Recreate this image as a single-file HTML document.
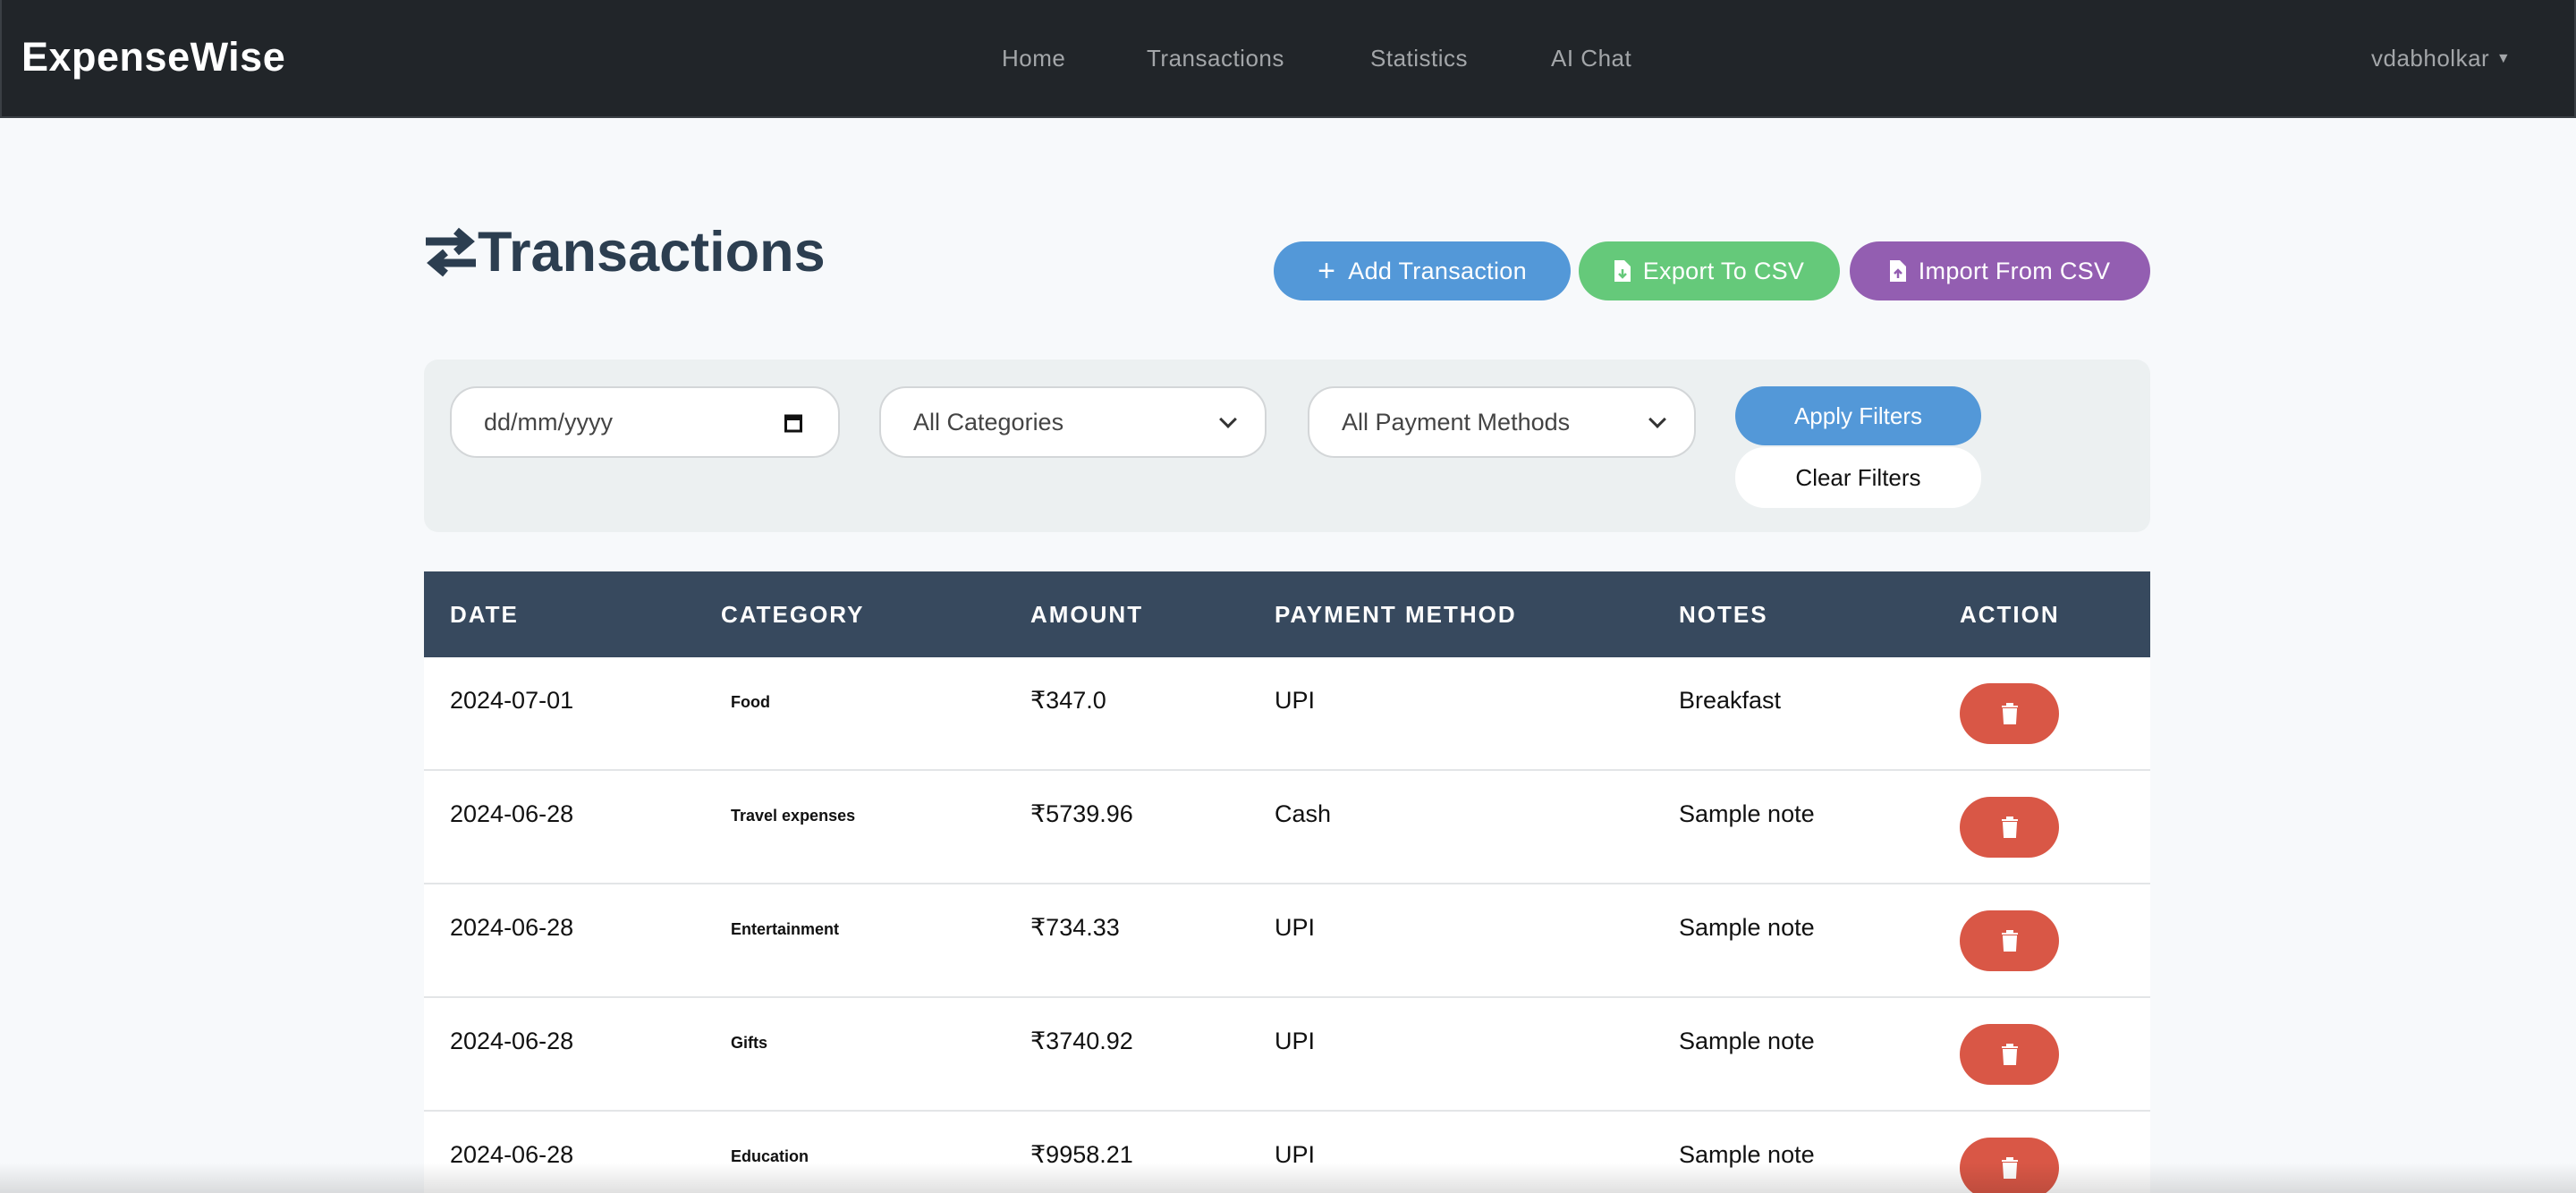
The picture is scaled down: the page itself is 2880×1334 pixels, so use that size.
<!DOCTYPE html>
<html><head><meta charset="utf-8"><style>
*{box-sizing:border-box;margin:0;padding:0}
html,body{width:2880px;height:1334px;overflow:hidden;background:#f7f9fb;font-family:"Liberation Sans",sans-serif;color:#111}
#wrap{position:relative;width:2880px;height:1334px;overflow:hidden}
.nav{position:absolute;left:0;top:0;width:2880px;height:132px;background:#212529;border:2px solid #3a3f44;border-top:none}
.brand{position:absolute;left:22px;top:38px;font-size:45px;font-weight:bold;color:#fff;letter-spacing:0.5px}
.nl{position:absolute;top:50px;font-size:26px;color:#a3a6a9;letter-spacing:0.5px}
.title{position:absolute;left:474px;top:246px;font-size:63px;font-weight:bold;color:#2c3e50;display:flex;align-items:center}
.btn{position:absolute;top:270px;height:66px;border-radius:33px;color:#fff;font-size:27px;display:flex;align-items:center;justify-content:center;gap:14px;letter-spacing:0.3px}
.panel{position:absolute;left:474px;top:402px;width:1930px;height:193px;background:#ecf0f1;border-radius:16px}
.inp{position:absolute;top:432px;height:80px;background:#fff;border:2px solid #d3d6d8;border-radius:30px;font-size:27px;color:#444;display:flex;align-items:center;padding-left:36px}
.chev{position:absolute;right:34px;top:28px;width:14px;height:14px;border-right:3px solid #333;border-bottom:3px solid #333;transform:rotate(45deg)}
.fb{position:absolute;left:1940px;width:275px;height:66px;border-radius:33px;font-size:26px;display:flex;align-items:center;justify-content:center}
.th{position:absolute;left:474px;top:639px;width:1930px;height:96px;background:#37495e}
.th span{position:absolute;top:33px;color:#fff;font-size:26px;font-weight:bold;letter-spacing:2px}
.row{position:absolute;left:474px;width:1930px;height:127px;background:#fff;border-bottom:2px solid #e3e5e7}
.row span{position:absolute;top:33px;font-size:27px;color:#111}
.row .cat{font-size:18px;font-weight:bold;top:40px;left:343px}
.del{position:absolute;left:1717px;top:29px;width:111px;height:68px;border-radius:34px;background:#d95746;display:flex;align-items:center;justify-content:center}
</style></head><body><div id="wrap">
<div class="nav">
<div class="brand">ExpenseWise</div>
<div class="nl" style="left:1118px">Home</div>
<div class="nl" style="left:1280px">Transactions</div>
<div class="nl" style="left:1530px">Statistics</div>
<div class="nl" style="left:1732px">AI Chat</div>
<div class="nl" style="left:2649px">vdabholkar <span style="font-size:16px;vertical-align:4px">▼</span></div>
</div>

<div class="title"><svg width="60" height="60" viewBox="0 0 60 60"><path d="M2 18H46M36 6L50 18L36 30" stroke="#2c3e50" stroke-width="9" fill="none"/><path d="M58 42H14M24 30L10 42L24 54" stroke="#2c3e50" stroke-width="9" fill="none"/></svg>Transactions</div>

<div class="btn" style="left:1424px;width:332px;background:#5398d8"><span style="font-size:34px">+</span>Add Transaction</div>
<div class="btn" style="left:1765px;width:292px;background:#65c97a"><svg width="18" height="24"><path d="M0 0H11L18 7V24H0Z" fill="#fff"/><path d="M9 10V19M5 15L9 19L13 15" stroke="#65c97a" stroke-width="2.5" fill="none"/></svg>Export To CSV</div>
<div class="btn" style="left:2068px;width:336px;background:#935eb1"><svg width="18" height="24"><path d="M0 0H11L18 7V24H0Z" fill="#fff"/><path d="M9 20V11M5 15L9 11L13 15" stroke="#935eb1" stroke-width="2.5" fill="none"/></svg>Import From CSV</div>

<div class="panel"></div>
<div class="inp" style="left:503px;width:436px">dd/mm/yyyy<svg style="position:absolute;right:40px;top:28px" width="20" height="22"><rect x="1.5" y="3" width="17" height="17" fill="none" stroke="#111" stroke-width="3"/><rect x="1.5" y="3" width="17" height="5" fill="#111"/></svg></div>
<div class="inp" style="left:983px;width:433px">All Categories<div class="chev"></div></div>
<div class="inp" style="left:1462px;width:434px">All Payment Methods<div class="chev"></div></div>
<div class="fb" style="top:432px;background:#5398d8;color:#fff">Apply Filters</div>
<div class="fb" style="top:500px;height:68px;background:#fff;color:#111">Clear Filters</div>

<div class="th"><span style="left:29px">DATE</span><span style="left:332px">CATEGORY</span><span style="left:678px">AMOUNT</span><span style="left:951px">PAYMENT METHOD</span><span style="left:1403px">NOTES</span><span style="left:1717px">ACTION</span></div>

<div class="row" style="top:735px"><span style="left:29px">2024-07-01</span><span class="cat">Food</span><span style="left:678px">₹347.0</span><span style="left:951px">UPI</span><span style="left:1403px">Breakfast</span><div class="del"><svg width="20" height="24"><path d="M1 4H19M7 4V1H13V4M3 7H17L16 23H4Z" fill="#fff" stroke="#fff" stroke-width="2"/></svg></div></div>
<div class="row" style="top:862px"><span style="left:29px">2024-06-28</span><span class="cat">Travel expenses</span><span style="left:678px">₹5739.96</span><span style="left:951px">Cash</span><span style="left:1403px">Sample note</span><div class="del"><svg width="20" height="24"><path d="M1 4H19M7 4V1H13V4M3 7H17L16 23H4Z" fill="#fff" stroke="#fff" stroke-width="2"/></svg></div></div>
<div class="row" style="top:989px"><span style="left:29px">2024-06-28</span><span class="cat">Entertainment</span><span style="left:678px">₹734.33</span><span style="left:951px">UPI</span><span style="left:1403px">Sample note</span><div class="del"><svg width="20" height="24"><path d="M1 4H19M7 4V1H13V4M3 7H17L16 23H4Z" fill="#fff" stroke="#fff" stroke-width="2"/></svg></div></div>
<div class="row" style="top:1116px"><span style="left:29px">2024-06-28</span><span class="cat">Gifts</span><span style="left:678px">₹3740.92</span><span style="left:951px">UPI</span><span style="left:1403px">Sample note</span><div class="del"><svg width="20" height="24"><path d="M1 4H19M7 4V1H13V4M3 7H17L16 23H4Z" fill="#fff" stroke="#fff" stroke-width="2"/></svg></div></div>
<div class="row" style="top:1243px;height:91px;border-bottom:none"><span style="left:29px">2024-06-28</span><span class="cat">Education</span><span style="left:678px">₹9958.21</span><span style="left:951px">UPI</span><span style="left:1403px">Sample note</span><div class="del"><svg width="20" height="24"><path d="M1 4H19M7 4V1H13V4M3 7H17L16 23H4Z" fill="#fff" stroke="#fff" stroke-width="2"/></svg></div></div>
<div style="position:absolute;left:0;top:1300px;width:2880px;height:34px;background:linear-gradient(rgba(0,0,0,0),rgba(0,0,0,0.12))"></div>
</div></body></html>
